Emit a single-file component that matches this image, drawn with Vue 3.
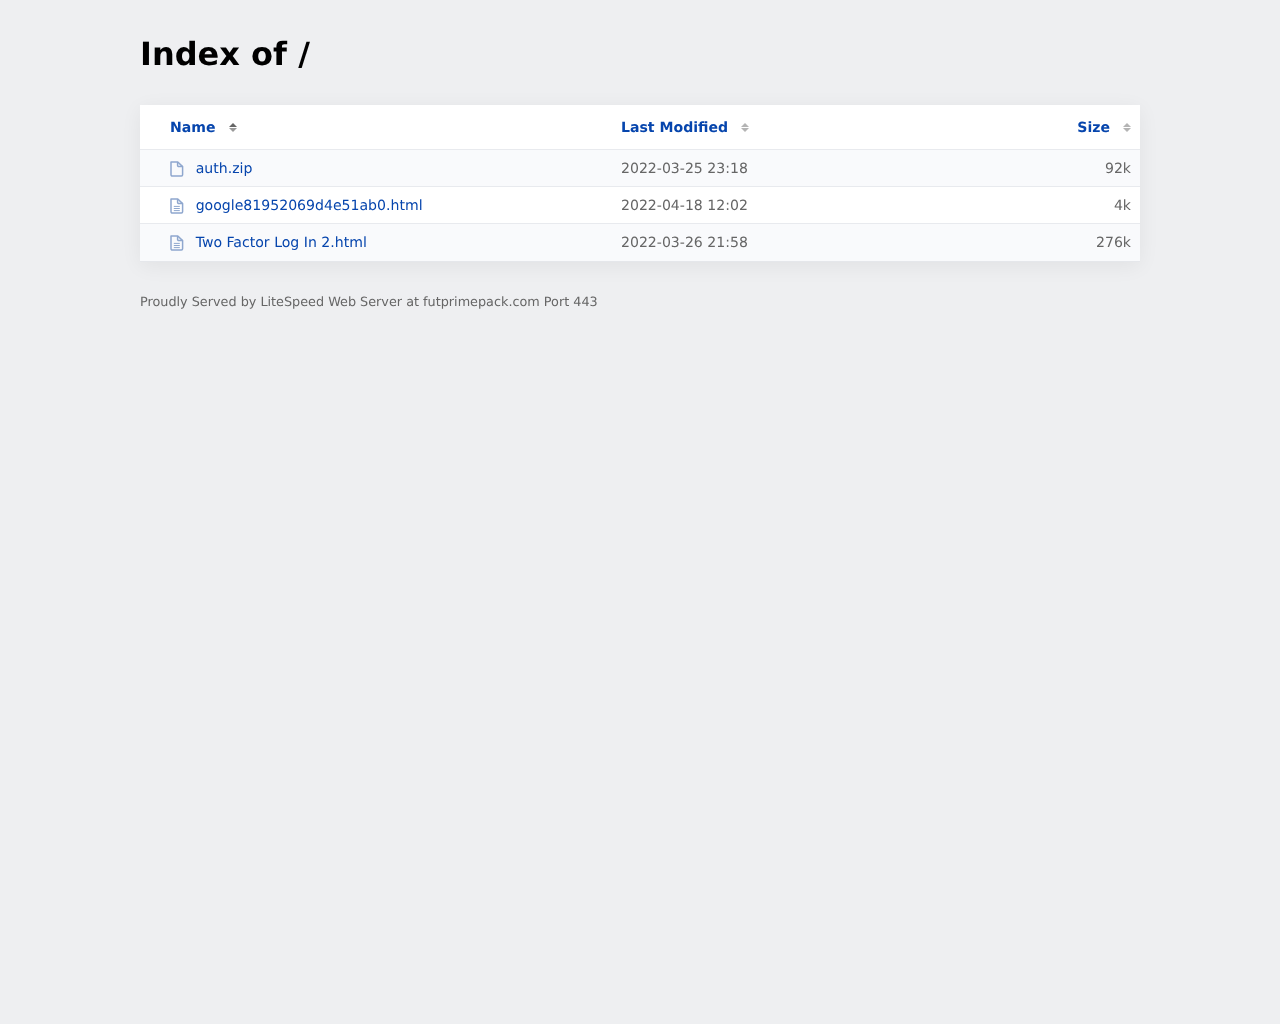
<script setup>
const rows = [
  { name: 'auth.zip', date: '2022-03-25 23:18', size: '92k', lines: false, alt: true },
  { name: 'google81952069d4e51ab0.html', date: '2022-04-18 12:02', size: '4k', lines: true, alt: false },
  { name: 'Two Factor Log In 2.html', date: '2022-03-26 21:58', size: '276k', lines: true, alt: true }
]
</script>

<template>
  <div class="page">
    <h1 class="title">Index of /</h1>
    <div class="card">
      <div class="row head">
        <div class="name"><a class="sort">Name</a><span class="arrows dark"><i class="up"></i><i class="down"></i></span></div>
        <div class="date"><a class="sort">Last Modified</a><span class="arrows"><i class="up"></i><i class="down"></i></span></div>
        <div class="size"><a class="sort">Size</a><span class="arrows"><i class="up"></i><i class="down"></i></span></div>
      </div>
      <div v-for="r in rows" :key="r.name" class="row item" :class="{ alt: r.alt }">
        <div class="name">
          <svg class="icon" viewBox="0 0 14 16" width="14" height="16" fill="none" stroke="#8fa7ce" stroke-width="1.5" stroke-linejoin="round">
            <path d="M1 1h6.8L12.6 5.6v8.2a1.2 1.2 0 0 1-1.2 1.2H2.2A1.2 1.2 0 0 1 1 13.8V1z" />
            <path d="M7.6 1v3.4a1.2 1.2 0 0 0 1.2 1.2h3.8" />
            <path v-if="r.lines" d="M3.8 8.4h6M3.8 10.5h6M3.8 12.6h6" stroke-width="1" />
          </svg>
          <a class="link">{{ r.name }}</a>
        </div>
        <div class="date muted">{{ r.date }}</div>
        <div class="size muted">{{ r.size }}</div>
      </div>
    </div>
    <p class="foot">Proudly Served by LiteSpeed Web Server at futprimepack.com Port 443</p>
  </div>
</template>

<style>
html, body { background: #eeeff1; }
</style>

<style scoped>
.page {
  width: 1000px;
  margin: 0 auto;
  padding-top: 34px;
  font-family: "DejaVu Sans", sans-serif;
  text-rendering: geometricPrecision;
  will-change: transform;
  min-height: 990px;
}
.title {
  margin: 0 0 31px;
  font-size: 32px;
  line-height: 40px;
  font-weight: 700;
  color: #000;
}
.card {
  background: #fff;
  box-shadow: 0 4px 20px rgba(0, 0, 0, 0.06);
}
.row {
  display: grid;
  box-sizing: border-box;
  grid-template-columns: 481px 1fr 150px;
  align-items: center;
  padding-top: 2px;
  font-size: 14.08px;
  line-height: 20px;
}
.head { height: 45px; border-bottom: 1px solid #e8eaee; }
.item { height: 37px; border-bottom: 1px solid #e8eaee; }
.item:last-child { height: 38px; padding-bottom: 1px; border-bottom: 1px solid #e5e7eb; }
.alt { background: #f9fafc; }
.name { padding-left: 30px; display: flex; align-items: center; }
.size { padding-right: 9px; display: flex; justify-content: flex-end; align-items: center; }
.date { display: flex; align-items: center; }
.sort { font-weight: 700; color: #0645ad; }
.link { color: #0645ad; margin-left: 11.7px; }
.muted { color: #666; }
.icon { flex: none; margin-bottom: 1px; }
.arrows {
  display: inline-flex;
  flex-direction: column;
  gap: 1px;
  margin-left: 13px;
  margin-bottom: 1px;
  width: 8px;
  align-items: center;
}
.arrows i { width: 0; height: 0; border-left: 4px solid transparent; border-right: 4px solid transparent; }
.arrows .up { border-bottom: 4px solid #b4b4b4; }
.arrows .down { border-top: 4px solid #b4b4b4; }
.arrows.dark .up { border-bottom-color: #666; }
.arrows.dark .down { border-top-color: #999; }
.foot {
  margin: 33px 0 0;
  font-size: 12.8px;
  line-height: 16px;
  color: #666;
}
</style>
